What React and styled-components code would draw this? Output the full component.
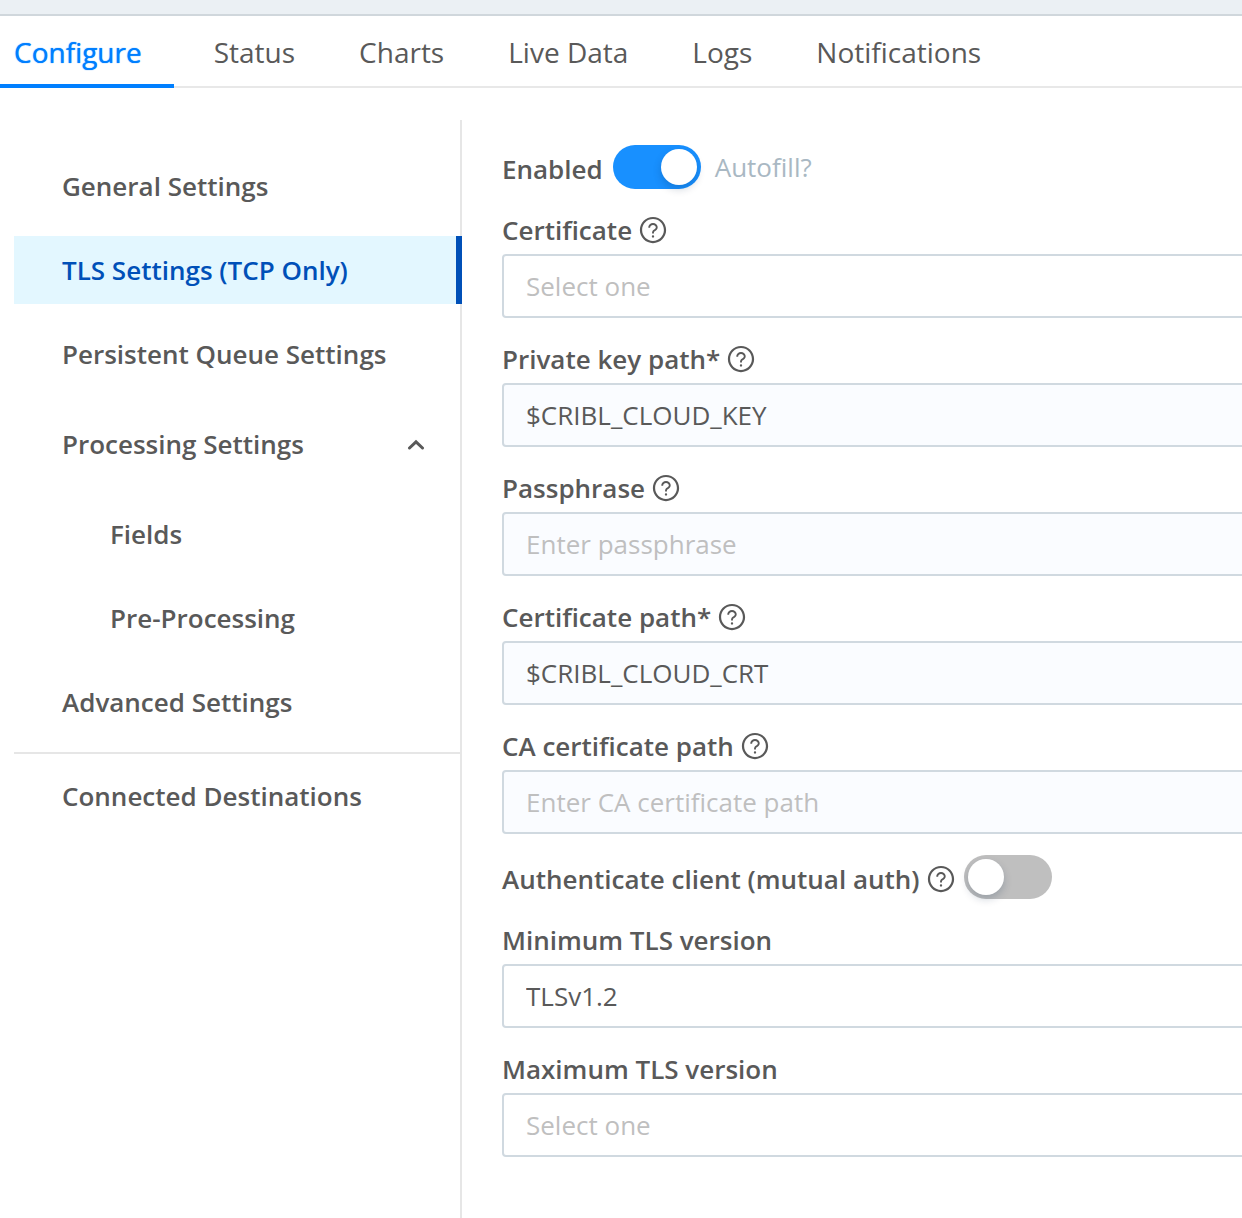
import { useState } from 'react';
import styled, { createGlobalStyle } from 'styled-components';
import { AiOutlineQuestionCircle } from 'react-icons/ai';

const GlobalStyle = createGlobalStyle`
  * {
    box-sizing: border-box;
  }
  body {
    margin: 0;
    background: #ffffff;
    color: #595959;
    font-family: 'Open Sans', sans-serif;
    font-size: 26px;
  }
  button, input, select {
    font: inherit;
    color: inherit;
  }
`;

const Page = styled.div`
  display: flex;
  flex-direction: column;
  min-height: 100vh;
  overflow: hidden;
`;

const TopStrip = styled.div`
  height: 16px;
  background: #ebf0f4;
  border-bottom: 2px solid #d0d7dc;
`;

const Tabs = styled.div`
  display: flex;
  height: 72px;
  box-shadow: inset 0 -2px #e8e8e8;
`;

const Tab = styled.button`
  padding: 4px 32px 0;
  border: none;
  border-bottom: 4px solid transparent;
  background: none;
  font-size: 28px;
  line-height: 40px;
  cursor: pointer;
  &:first-child {
    padding-left: 14px;
    margin-right: 8px;
  }
  &[aria-selected='true'] {
    color: #007fff;
    border-bottom-color: #007fff;
    text-shadow: 0 0 1px currentColor;
  }
`;

const Content = styled.div`
  display: flex;
  flex: 1;
  padding: 32px 0 0 14px;
`;

const SideNav = styled.nav`
  display: flex;
  flex-direction: column;
  flex: 0 0 448px;
  gap: 16px;
  padding-top: 32px;
  border-right: 2px solid #e6e6e6;
`;

const NavLink = styled.a`
  height: 68px;
  margin-right: -2px;
  padding-left: ${(props) => (props.$nested ? '96px' : '48px')};
  color: ${(props) => (props.$active ? '#0050b8' : '#595959')};
  background: ${(props) => (props.$active ? '#e3f7ff' : 'none')};
  border-right: 6px solid ${(props) => (props.$active ? '#0050b8' : 'transparent')};
  font-weight: 600;
  line-height: 68px;
  text-decoration: none;
`;

const NavGroup = styled.button`
  display: flex;
  align-items: center;
  justify-content: space-between;
  height: 80px;
  padding: 0 34px 0 48px;
  border: none;
  background: none;
  font-weight: 600;
  cursor: pointer;
`;

const Divider = styled.hr`
  width: 100%;
  height: 2px;
  margin: 0 0 -8px;
  border: none;
  background: #e6e6e6;
`;

const Form = styled.form`
  flex: 1;
  margin-right: -24px;
  padding: 25px 0 60px 40px;
  display: flex;
  flex-direction: column;
  gap: 21px;
`;

const Label = styled.label`
  display: flex;
  align-items: center;
  gap: 6px;
  height: 40px;
  font-weight: 600;
`;

const SwitchRow = styled.div`
  display: flex;
  align-items: center;
  height: 44px;
  gap: 10px;
  ${Label} {
    height: 44px;
    padding-top: 4px;
  }
`;

const HelpIcon = styled(AiOutlineQuestionCircle)`
  width: 30px;
  height: 30px;
  margin-right: -2px;
`;

const Field = styled.div`
  display: flex;
  flex-direction: column;
  gap: 4px;
`;

const Input = styled.input`
  width: 100%;
  height: 64px;
  padding: 0 22px;
  border: 2px solid #d0d9e0;
  border-radius: 4px;
  background: #fafcff;
  &::placeholder {
    color: #bfbfbf;
  }
`;

const Select = styled.select`
  appearance: none;
  width: 100%;
  height: 64px;
  padding: 0 22px;
  border: 2px solid #d0d9e0;
  border-radius: 4px;
  background: #ffffff;
  color: ${(props) => (props.value ? '#595959' : '#bfbfbf')};
`;

const Switch = styled.input`
  appearance: none;
  width: 88px;
  height: 44px;
  margin: 0;
  border-radius: 22px;
  background: #bfbfbf;
  cursor: pointer;
  &::before {
    content: '';
    display: block;
    width: 36px;
    height: 36px;
    margin: 4px;
    border-radius: 50%;
    background: #ffffff;
    box-shadow: 0 4px 8px rgba(0, 35, 70, 0.2);
  }
  &:checked {
    background: #1890ff;
  }
  &:checked::before {
    margin-left: 48px;
  }
`;

const Autofill = styled.button`
  padding: 0 4px;
  border: none;
  background: none;
  color: #a9b8c3;
  cursor: pointer;
`;

const TABS = ['Configure', 'Status', 'Charts', 'Live Data', 'Logs', 'Notifications'];

const TextField = ({ id, label, placeholder, defaultValue }) => (
  <Field>
    <Label htmlFor={id}>{label}<HelpIcon /></Label>
    <Input id={id} type="text" placeholder={placeholder} defaultValue={defaultValue} />
  </Field>
);

const SelectField = ({ id, label, help, initial = '', options }) => {
  const [value, setValue] = useState(initial);
  return (
    <Field>
      <Label htmlFor={id}>{label}{help && <HelpIcon />}</Label>
      <Select id={id} value={value} onChange={(e) => setValue(e.target.value)}>
        <option value="">Select one</option>
        {options.map((option) => <option key={option}>{option}</option>)}
      </Select>
    </Field>
  );
};

const App = () => {
  const [tab, setTab] = useState('Configure');
  const [section, setSection] = useState('TLS Settings (TCP Only)');
  const [open, setOpen] = useState(true);

  const navLink = (name, nested) => (
    <NavLink
      href="#"
      $nested={nested}
      $active={section === name}
      onClick={(e) => {
        e.preventDefault();
        setSection(name);
      }}
    >
      {name}
    </NavLink>
  );

  return (
    <Page>
      <GlobalStyle />
      <TopStrip />
      <Tabs role="tablist">
        {TABS.map((name) => (
          <Tab key={name} role="tab" aria-selected={tab === name} onClick={() => setTab(name)}>
            {name}
          </Tab>
        ))}
      </Tabs>
      <Content>
        <SideNav>
          {navLink('General Settings')}
          {navLink('TLS Settings (TCP Only)')}
          {navLink('Persistent Queue Settings')}
          <NavGroup aria-expanded={open} onClick={() => setOpen(!open)}>
            Processing Settings
            <svg width="20" height="12" viewBox="0 0 20 12" fill="none" stroke="currentColor" strokeWidth="3" strokeLinecap="round">
              <path d={open ? 'M3.5 10L10 3.8L16.5 10' : 'M3.5 3.8L10 10L16.5 3.8'} />
            </svg>
          </NavGroup>
          {open && navLink('Fields', true)}
          {open && navLink('Pre-Processing', true)}
          {navLink('Advanced Settings')}
          <Divider />
          {navLink('Connected Destinations')}
        </SideNav>
        <Form onSubmit={(e) => e.preventDefault()}>
          <SwitchRow>
            <Label htmlFor="enabled">Enabled</Label>
            <Switch id="enabled" type="checkbox" role="switch" defaultChecked />
            <Autofill type="button">Autofill?</Autofill>
          </SwitchRow>
          <SelectField id="certificate" label="Certificate" help options={['default']} />
          <TextField id="keyPath" label="Private key path*" defaultValue="$CRIBL_CLOUD_KEY" />
          <TextField id="passphrase" label="Passphrase" placeholder="Enter passphrase" />
          <TextField id="certPath" label="Certificate path*" defaultValue="$CRIBL_CLOUD_CRT" />
          <TextField id="caPath" label="CA certificate path" placeholder="Enter CA certificate path" />
          <SwitchRow>
            <Label htmlFor="mutual">Authenticate client (mutual auth)<HelpIcon /></Label>
            <Switch id="mutual" type="checkbox" role="switch" />
          </SwitchRow>
          <SelectField id="minTls" label="Minimum TLS version" initial="TLSv1.2" options={['TLSv1.2', 'TLSv1.3']} />
          <SelectField id="maxTls" label="Maximum TLS version" options={['TLSv1.2', 'TLSv1.3']} />
        </Form>
      </Content>
    </Page>
  );
};

export default App;
